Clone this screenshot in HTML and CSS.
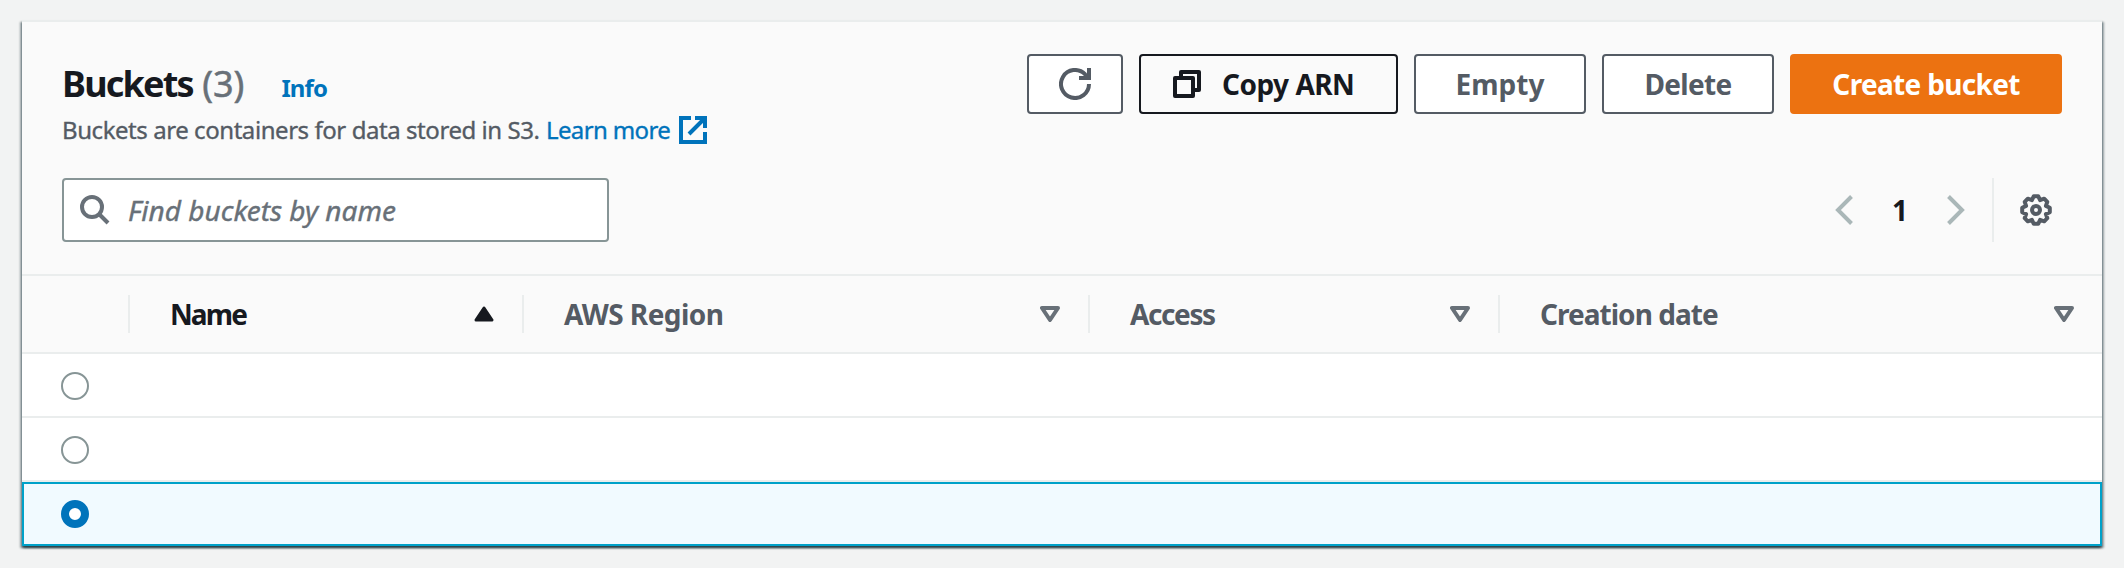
FILE: index.html
```html
<!DOCTYPE html>
<html lang="en">
<head>
<meta charset="utf-8">
<title>Buckets</title>
<link rel="stylesheet" href="styles.css">
</head>
<body>
<main class="card">
  <header class="card-header">
    <div class="top">
      <div class="heading">
        <div class="title-line"><h1 class="title"><span class="t title-name">Buckets</span> <span class="t count">(3)</span></h1><a class="t info">Info</a></div>
        <p class="description"><span class="t desc">Buckets are containers for data stored in S3.</span><a class="t learn">Learn more</a><svg class="external" viewBox="0 0 28 28" width="28" height="28"><path d="M12 2H2v24h24V16M16 2h10v10M26 2L10 18" fill="none" stroke="currentColor" stroke-width="4"/></svg></p>
      </div>
      <div class="actions">
        <button class="btn refresh" aria-label="Refresh"><svg viewBox="0 0 32 32" width="32" height="32" fill="none" stroke="currentColor" stroke-width="4"><path d="M30 16A14 14 0 1 1 26 6.200L29 10M30 0v10H20"/></svg></button>
        <button class="btn copy"><svg viewBox="0 0 28 28" width="28" height="28" fill="none" stroke="currentColor" stroke-width="4" stroke-linejoin="round"><path d="M8 6V2h18v18h-4M2 8h18v18H2z"/></svg><span class="t">Copy ARN</span></button>
        <button class="btn empty"><span class="t">Empty</span></button>
        <button class="btn delete"><span class="t">Delete</span></button>
        <button class="btn create"><span class="t">Create bucket</span></button>
      </div>
    </div>
    <div class="tools">
      <div class="search"><svg viewBox="0 0 30 30" width="30" height="30" fill="none" stroke="currentColor" stroke-width="4"><circle cx="12" cy="12" r="10"/><path d="M19 19l9 9"/></svg><span class="t find">Find buckets by name</span></div>
      <nav class="pages">
        <svg class="chevron" viewBox="0 0 18 30" width="18" height="30"><path d="M16.500 1.500L3 15l13.500 13.500"/></svg>
        <span class="t page">1</span>
        <svg class="chevron" viewBox="0 0 18 30" width="18" height="30"><path d="M1.500 1.500L15 15 1.500 28.500"/></svg>
        <span class="rule"></span>
        <svg class="gear" viewBox="0 0 32 32" width="32" height="32" fill="none" stroke="currentColor" stroke-width="4" stroke-linejoin="round"><path d="M29.800 13.800V18.200L25.900 20.100 27.300 24.200 24.200 27.300 20.100 25.900 18.200 29.800H13.800L11.900 25.900 7.800 27.300 4.700 24.200 6.100 20.100 2.200 18.200V13.800L6.100 11.900 4.700 7.800 7.800 4.700 11.900 6.100 13.800 2.200H18.200L20.100 6.100 24.200 4.700 27.300 7.800 25.900 11.900z"/><circle cx="16" cy="16" r="4"/></svg>
      </nav>
    </div>
  </header>
  <div class="grid head">
    <div class="cell"></div>
    <div class="cell sorted"><span class="t name">Name</span><svg class="sort" viewBox="0 0 20 16" width="20" height="16"><path d="M10 2L18 14H2z" fill="currentColor" stroke="currentColor" stroke-width="3" stroke-linejoin="round"/></svg></div>
    <div class="cell"><span class="t region">AWS Region</span><svg class="sort" viewBox="0 0 20 16" width="20" height="16"><path d="M2 2h16l-8 12z" fill="none" stroke="currentColor" stroke-width="4" stroke-linejoin="round"/></svg></div>
    <div class="cell"><span class="t access">Access</span><svg class="sort" viewBox="0 0 20 16" width="20" height="16"><path d="M2 2h16l-8 12z" fill="none" stroke="currentColor" stroke-width="4" stroke-linejoin="round"/></svg></div>
    <div class="cell"><span class="t created">Creation date</span><svg class="sort" viewBox="0 0 20 16" width="20" height="16"><path d="M2 2h16l-8 12z" fill="none" stroke="currentColor" stroke-width="4" stroke-linejoin="round"/></svg></div>
  </div>
  <div class="row"><span class="radio"></span></div>
  <div class="row"><span class="radio"></span></div>
  <div class="row selected"><span class="radio checked"></span></div>
</main>
</body>
</html>
```
FILE: styles.css
```css
* { box-sizing: border-box; }
body {
  margin: 0;
  padding: 20px 22px 22px;
  background: #f2f3f3;
  color: #16191f;
  font-family: "Noto Sans", "Open Sans", sans-serif;
  font-size: 28px;
  line-height: 36px;
}
h1, p { margin: 0; }
svg { display: block; flex: none; }
.t { white-space: nowrap; flex: none; }
.card {
  height: 526px;
  border-top: 2px solid #eaeded;
  background: #fff;
  box-shadow: 0 2px 2px 0 rgba(0, 28, 36, .6), 2px 2px 2px 0 rgba(0, 28, 36, .35), -2px 2px 2px 0 rgba(0, 28, 36, .35);
}
.card-header {
  height: 254px;
  padding: 32px 40px 0;
  background: #fafafa;
  border-bottom: 2px solid #eaeded;
}
.top { display: flex; justify-content: space-between; height: 124px; }
.title-line { display: flex; align-items: baseline; height: 58px; padding-top: 6px; }
.title { font-size: 36px; line-height: 48px; font-weight: 700; }
.title-name { letter-spacing: -1.8px; }
.count { color: #687078; font-weight: 400; -webkit-text-stroke: .5px currentColor; }
.info { margin-left: 37px; font-size: 24px; font-weight: 700; letter-spacing: -.9px; color: #0073bb; }
.description { display: flex; font-size: 24px; line-height: 36px; color: #545b64; -webkit-text-stroke: .35px currentColor; }
.desc { letter-spacing: -.44px; }
.learn { margin-left: 6.500px; letter-spacing: -.65px; color: #0073bb; }
.external { margin: 4px 0 0 9px; color: #0073bb; }
.actions { display: flex; gap: 16px; height: 60px; }
.btn {
  display: flex;
  align-items: center;
  justify-content: center;
  height: 60px;
  padding: 0;
  border: 2px solid #545b64;
  border-radius: 4px;
  background: #fff;
  color: #545b64;
  font: 700 28px/36px "Noto Sans", "Open Sans", sans-serif;
}
.refresh { width: 96px; }
.copy { width: 259px; padding-left: 32px; justify-content: flex-start; gap: 21px; background: #fafafa; border-color: #16191f; color: #16191f; letter-spacing: -.5px; }
.empty, .delete { width: 172px; }
.delete { letter-spacing: -.65px; }
.create { width: 272px; background: #ec7211; border-color: #ec7211; color: #fff; letter-spacing: -.68px; }
.tools { display: flex; justify-content: space-between; height: 64px; }
.search {
  display: flex;
  align-items: center;
  gap: 18px;
  width: 547px;
  height: 64px;
  padding-left: 16px;
  border: 2px solid #879596;
  border-radius: 4px;
  background: #fff;
  color: #687078;
}
.find { font-style: italic; -webkit-text-stroke: .4px currentColor; }
.pages { display: flex; align-items: center; padding-right: 10px; }
.chevron { fill: none; stroke: #aab7b8; stroke-width: 4; }
.page { width: 94px; text-align: center; font-weight: 700; }
.rule { width: 2px; height: 64px; margin: 0 26px 0 27px; background: #eaeded; }
.gear { color: #545b64; }
.grid { display: grid; grid-template-columns: 108px 394px 566px 410px 602px; }
.head { height: 78px; align-items: center; background: #fafafa; border-bottom: 2px solid #eaeded; font-weight: 700; color: #545b64; }
.cell { display: flex; align-items: center; justify-content: space-between; height: 38px; padding: 0 28px 0 40px; border-right: 2px solid #eaeded; }
.cell:last-child { border-right: 0; }
.cell .t { padding-bottom: 1px; }
.sorted, .sorted .sort { color: #16191f; }
.sort { color: #687078; }
.name { letter-spacing: -1.9px; }
.region { letter-spacing: -.55px; }
.access { letter-spacing: -1.4px; }
.created { letter-spacing: -.97px; }
.row { display: flex; align-items: center; height: 64px; padding: 2px 39px 0; border-bottom: 2px solid #eaeded; }
.selected { border: 2px solid #00a1c9; padding: 0 37px; background: #f1faff; }
.radio { width: 28px; height: 28px; border: 2px solid #879596; border-radius: 50%; background: #fff; }
.checked { border: 8px solid #0073bb; }
```
